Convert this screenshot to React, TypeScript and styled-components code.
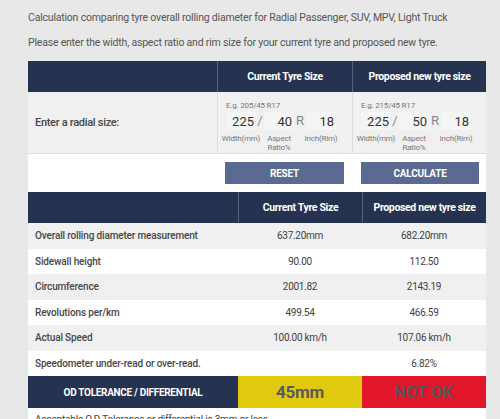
import styled, { createGlobalStyle } from 'styled-components';

const GlobalStyle = createGlobalStyle`
  html, body {
    margin: 0;
    padding: 0;
    background: #e8e8e8;
    font-family: Roboto, "Liberation Sans", Arial, sans-serif;
    color: #444;
    overflow: hidden;
  }
`;

const Page = styled.div`
  width: 500px;
  height: 419px;
  overflow: hidden;
  padding-left: 28px;
  box-sizing: border-box;
`;

const Intro = styled.p`
  margin: 0;
  font-size: 10.5px;
  letter-spacing: -0.2px;
  color: #555;
  line-height: 14px;
  padding-top: ${({ $top }) => $top}px;
`;

const Column = styled.div`
  width: 458px;
  margin-top: 11px;
`;

const Grid = styled.div`
  display: grid;
  grid-template-columns: ${({ $cols }) => $cols};
`;

const HeadCell = styled.div`
  background: #263350;
  color: #fff;
  font-weight: 700;
  font-size: 10.5px;
  letter-spacing: -0.35px;
  height: 31px;
  display: flex;
  align-items: center;
  justify-content: center;
  border-left: ${({ $first }) => ($first ? 'none' : '1px solid #56627c')};
`;

const InputLabelCell = styled.div`
  background: #f0f0f0;
  height: 62px;
  box-sizing: border-box;
  display: flex;
  align-items: center;
  padding-left: 7px;
  font-size: 11px;
  font-weight: 500;
  letter-spacing: -0.3px;
  color: #474747;
  border-bottom: 1px solid #dcdcdc;
`;

const InputCell = styled.div`
  background: #f0f0f0;
  height: 62px;
  box-sizing: border-box;
  padding: 9px 0 0 8px;
  border-left: 1px solid #dcdcdc;
  border-bottom: 1px solid #dcdcdc;
`;

const Example = styled.div`
  font-size: 8px;
  color: #777;
  letter-spacing: -0.2px;
  margin-bottom: 2px;
`;

const InputRow = styled.div`
  display: flex;
  align-items: flex-start;
`;

const Field = styled.div`
  width: 30px;
  display: flex;
  flex-direction: column;
  align-items: center;
`;

const SizeInput = styled.input`
  width: 30px;
  height: 18px;
  box-sizing: border-box;
  border: none;
  background: #f5f5f5;
  text-align: right;
  padding: 0 2px 0 0;
  font-family: inherit;
  font-size: 13px;
  color: #333;
  outline: none;
`;

const FieldLabel = styled.span`
  font-size: 8px;
  color: #777;
  letter-spacing: -0.2px;
  white-space: nowrap;
  text-align: center;
  line-height: 9px;
  margin-top: 4px;
  width: 24px;
  display: flex;
  justify-content: center;
`;

const Sep = styled.span`
  width: ${({ $w }) => $w}px;
  text-align: center;
  font-size: 13px;
  color: #888;
  line-height: 18px;
`;

const ButtonRow = styled.div`
  display: grid;
  grid-template-columns: 189px 135px 134px;
  background: #fff;
  padding: 8px 0;
`;

const Button = styled.button`
  grid-column: ${({ $col }) => $col};
  margin: 0 ${({ $r }) => $r}px 0 ${({ $l }) => $l}px;
  height: 22px;
  padding: 0;
  border: none;
  background: #5b6a91;
  color: #fff;
  font-family: inherit;
  font-weight: 700;
  font-size: 10px;
  letter-spacing: -0.2px;
  cursor: pointer;
`;

const ResultCell = styled.div`
  height: 25.5px;
  display: flex;
  align-items: center;
  justify-content: ${({ $label }) => ($label ? 'flex-start' : 'center')};
  padding-left: ${({ $label }) => ($label ? 7 : 0)}px;
  background: ${({ $odd }) => ($odd ? '#f0f0f0' : '#fff')};
  font-size: 10px;
  font-weight: ${({ $label }) => ($label ? 500 : 400)};
  letter-spacing: ${({ $label }) => ($label ? -0.15 : -0.3)}px;
  color: ${({ $label }) => ($label ? '#474747' : '#3f3f3f')};
`;

const OdCell = styled.div`
  height: 32px;
  display: flex;
  align-items: center;
  justify-content: center;
  font-weight: 700;
  background: ${({ $bg }) => $bg};
  color: ${({ $color }) => $color};
  font-size: ${({ $size }) => $size}px;
  letter-spacing: ${({ $ls }) => $ls}px;
`;

const Note = styled.p`
  margin: 0;
  padding: 6px 0 0 7px;
  font-size: 10px;
  letter-spacing: -0.2px;
  color: #444;
  background: #fff;
  height: 20px;
`;

const SizeInputs = ({ example, w, a, r }) => (
  <InputCell>
    <Example>{example}</Example>
    <InputRow>
      <Field>
        <SizeInput defaultValue={w} />
        <FieldLabel>Width(mm)</FieldLabel>
      </Field>
      <Sep $w={8}>/</Sep>
      <Field>
        <SizeInput defaultValue={a} />
        <FieldLabel>Aspect<br />Ratio%</FieldLabel>
      </Field>
      <Sep $w={12}>R</Sep>
      <Field>
        <SizeInput defaultValue={r} />
        <FieldLabel>Inch(Rim)</FieldLabel>
      </Field>
    </InputRow>
  </InputCell>
);

const results = [
  ['Overall rolling diameter measurement', '637.20mm', '682.20mm'],
  ['Sidewall height', '90.00', '112.50'],
  ['Circumference', '2001.82', '2143.19'],
  ['Revolutions per/km', '499.54', '466.59'],
  ['Actual Speed', '100.00 km/h', '107.06 km/h'],
  ['Speedometer under-read or over-read.', '', '6.82%'],
];

export default function App() {
  return (
    <Page>
      <GlobalStyle />
      <Intro $top={11}>
        Calculation comparing tyre overall rolling diameter for Radial Passenger, SUV, MPV, Light Truck
      </Intro>
      <Intro $top={11}>
        Please enter the width, aspect ratio and rim size for your current tyre and proposed new tyre.
      </Intro>
      <Column>
        <Grid $cols="189px 135px 134px">
          <HeadCell $first />
          <HeadCell>Current Tyre Size</HeadCell>
          <HeadCell>Proposed new tyre size</HeadCell>
          <InputLabelCell>Enter a radial size:</InputLabelCell>
          <SizeInputs example="E.g. 205/45 R17" w="225" a="40" r="18" />
          <SizeInputs example="E.g. 215/45 R17" w="225" a="50" r="18" />
        </Grid>
        <ButtonRow>
          <Button $col={2} $l={8} $r={8}>RESET</Button>
          <Button $col={3} $l={9} $r={7}>CALCULATE</Button>
        </ButtonRow>
        <Grid $cols="210px 124px 124px">
          <HeadCell $first />
          <HeadCell>Current Tyre Size</HeadCell>
          <HeadCell>Proposed new tyre size</HeadCell>
          {results.map(([label, cur, next], i) => (
            <>
              <ResultCell key={label} $label $odd={i % 2 === 0}>{label}</ResultCell>
              <ResultCell $odd={i % 2 === 0}>{cur}</ResultCell>
              <ResultCell $odd={i % 2 === 0}>{next}</ResultCell>
            </>
          ))}
          <OdCell $bg="#263350" $color="#fff" $size={10} $ls={-0.3}>OD TOLERANCE / DIFFERENTIAL</OdCell>
          <OdCell $bg="#e1c90f" $color="#5a5a5a" $size={17} $ls={-0.2}>45mm</OdCell>
          <OdCell $bg="#e3152b" $color="#5e5253" $size={17} $ls={-0.2}>NOT OK</OdCell>
        </Grid>
        <Note>Acceptable O.D Tolerance or differential is 3mm or less</Note>
      </Column>
    </Page>
  );
}
